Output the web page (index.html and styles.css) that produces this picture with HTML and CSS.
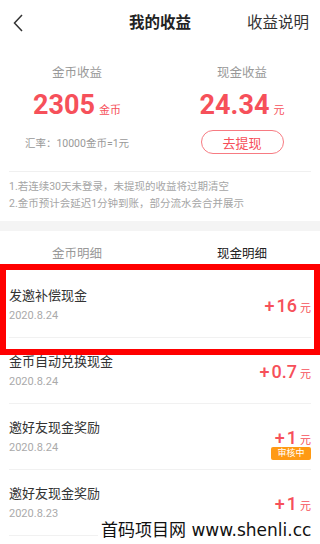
FILE: index.html
```html
<!DOCTYPE html>
<html lang="zh">
<head>
<meta charset="utf-8">
<link rel="stylesheet" href="styles.css">
</head>
<body>
<div class="page">
  <header class="topbar">
    <svg class="back" width="10" height="18" viewBox="0 0 10 18"><path d="M9 1 L1.5 9 L9 17" fill="none" stroke="#333" stroke-width="1.5"/></svg>
    <div class="title">我的收益</div>
    <div class="help">收益说明</div>
  </header>

  <section class="summary">
    <div class="col">
      <div class="label">金币收益</div>
      <div class="num">2305<span class="unit">金币</span></div>
      <div class="third"><span class="rate">汇率：10000金币=1元</span></div>
    </div>
    <div class="col">
      <div class="label">现金收益</div>
      <div class="num">24.34<span class="unit">元</span></div>
      <div class="third"><span class="btn">去提现</span></div>
    </div>
  </section>

  <section class="notes">
    <p>1.若连续30天未登录，未提现的收益将过期清空</p>
    <p>2.金币预计会延迟1分钟到账，部分流水会合并展示</p>
  </section>

  <div class="band"></div>

  <nav class="tabs">
    <div class="tab"><span class="tab-text">金币明细</span></div>
    <div class="tab active"><span class="tab-text">现金明细</span></div>
  </nav>

  <ul class="list">
    <li class="row">
      <div class="info"><div class="name">发邀补偿现金</div><div class="date">2020.8.24</div></div>
      <div class="amt"><div class="val"><span class="plus">+</span>16<span class="yuan">元</span></div></div>
    </li>
    <li class="row">
      <div class="info"><div class="name">金币自动兑换现金</div><div class="date">2020.8.24</div></div>
      <div class="amt"><div class="val"><span class="plus">+</span>0.7<span class="yuan">元</span></div></div>
    </li>
    <li class="row">
      <div class="info"><div class="name">邀好友现金奖励</div><div class="date">2020.8.24</div></div>
      <div class="amt"><div class="val"><span class="plus">+</span>1<span class="yuan">元</span></div><span class="badge">审核中</span></div>
    </li>
    <li class="row">
      <div class="info"><div class="name">邀好友现金奖励</div><div class="date">2020.8.23</div></div>
      <div class="amt"><div class="val"><span class="plus">+</span>1<span class="yuan">元</span></div></div>
    </li>
  </ul>

  <div class="highlight"></div>
  <div class="watermark">首码项目网 www.shenli.cc</div>
</div>
</body>
</html>
```

FILE: styles.css
```css
* { box-sizing: border-box; margin: 0; padding: 0; }
html, body { background: #fff; }
body {
  font-family: Roboto, "Noto Sans CJK SC", sans-serif;
  color: #333;
  width: 320px;
  height: 544px;
  overflow: hidden;
}
.page { position: relative; width: 320px; height: 544px; overflow: hidden; }

.topbar {
  height: 46px;
  display: flex;
  align-items: center;
  padding: 0 11px 0 13px;
  position: relative;
}
.back { display: block; margin-top: -1px; }
.title {
  position: absolute;
  left: 0; right: 0;
  text-align: center;
  font-size: 15.5px;
  font-weight: bold;
  color: #222;
  line-height: 20px;
  pointer-events: none;
}
.help {
  margin-left: auto;
  font-size: 15.5px;
  color: #333;
  line-height: 20px;
}

.summary {
  display: grid;
  grid-template-columns: 154px 156px;
  column-gap: 10px;
  padding: 18px 0 0;
}
.col { display: flex; flex-direction: column; align-items: center; }
.label { font-size: 12.5px; line-height: 18px; color: #999; }
.num {
  margin-top: 7px;
  font-size: 27px;
  line-height: 32px;
  height: 32px;
  font-weight: bold;
  color: #f6505a;
}
.unit { font-size: 11px; font-weight: normal; margin-left: 4px; line-height: 1; }
.third { margin-top: 9px; height: 24px; display: flex; align-items: center; }
.rate { font-size: 10.5px; color: #999; line-height: 14px; margin-top: 3px; }
.btn {
  display: flex;
  align-items: center;
  justify-content: center;
  width: 83px;
  height: 24px;
  border: 1px solid #f77b82;
  border-radius: 12px;
  font-size: 13px;
  color: #f6505a;
}

.notes {
  margin: 17px 9px 0;
  border-top: 1px solid #f0f0f0;
  padding: 6px 0 9px;
}
.notes p { font-size: 10.5px; line-height: 17px; color: #a5a5a5; white-space: nowrap; }

.band { height: 10px; background: #f4f4f4; }

.tabs {
  display: grid;
  grid-template-columns: 154px 156px;
  column-gap: 10px;
  height: 41px;
}
.tab { display: flex; justify-content: center; padding-top: 14px; }
.tab-text {
  font-size: 12.5px;
  line-height: 18px;
  color: #999;
  padding-bottom: 3px;
  border-bottom: 3px solid transparent;
  height: 24px;
}
.tab.active .tab-text { color: #222; border-bottom-color: #f6505a; }

.list { list-style: none; }
.row {
  display: flex;
  justify-content: space-between;
  align-items: flex-start;
  height: 66px;
  margin: 0 9px;
  border-bottom: 1px solid #f1f1f1;
}
.info { padding-top: 15px; }
.name { font-size: 13px; line-height: 18px; color: #333; }
.date { margin-top: 4px; font-size: 11px; line-height: 14px; color: #aaa; }
.amt { padding-top: 24px; display: flex; flex-direction: column; align-items: flex-end; }
.val { font-size: 18px; line-height: 19px; color: #f6505a; font-weight: 500; }
.plus { margin-right: 2px; }
.yuan { font-size: 11px; font-weight: normal; margin-left: 3px; line-height: 1; }
.badge {
  display: flex;
  align-items: center;
  justify-content: center;
  width: 40px;
  height: 13px;
  background: #ff9a14;
  border-radius: 2px;
  color: #fff;
  font-size: 9px;
  line-height: 13px;
}

.highlight {
  position: absolute;
  left: 0;
  top: 264px;
  width: 320px;
  height: 91px;
  border: 6px solid #ff0000;
  pointer-events: none;
}
.watermark {
  position: absolute;
  left: 98px;
  top: 519px;
  padding: 0 3px;
  background: #fff;
  font-family: "DejaVu Sans", "Noto Sans CJK SC", sans-serif;
  font-size: 17px;
  line-height: 22px;
  color: #111;
  white-space: nowrap;
}
```
